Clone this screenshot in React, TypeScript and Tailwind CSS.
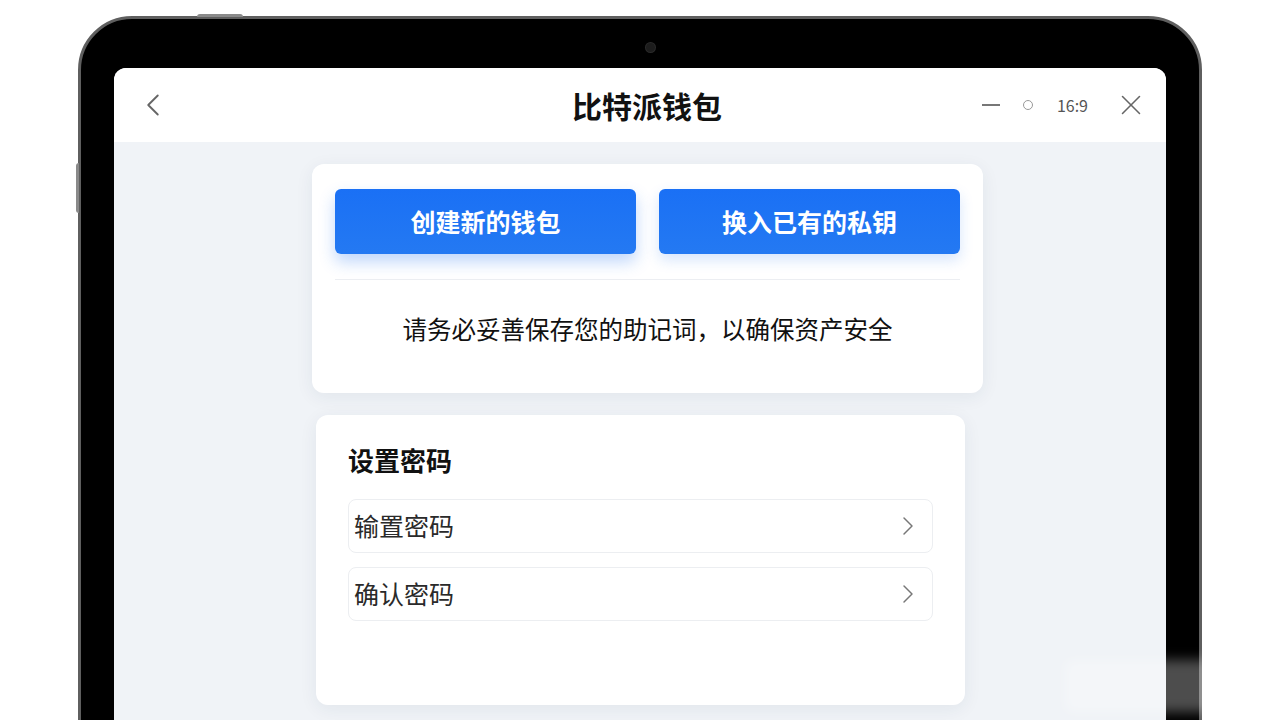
import { ChevronLeft, ChevronRight, X } from 'lucide-react';

const font = { fontFamily: '"Noto Sans CJK SC", "Noto Sans", sans-serif' };

export default function App() {
  return (
    <div className="relative h-[720px] w-[1280px] overflow-hidden bg-white" style={font}>
      <div className="pl-[78px] pt-[16px]">
        {/* Tablet frame */}
        <div className="relative h-[760px] w-[1124px] rounded-[54px] border-[3px] border-[#5f5f5f] bg-black px-[33px] pt-[49px]">
          {/* hardware bits */}
          <div className="absolute left-[116px] top-[-5px] h-[3px] w-[46px] rounded-t bg-[#8a8a8a]" />
          <div className="absolute left-[-5px] top-[144px] h-[50px] w-[3px] rounded-l bg-[#8a8a8a]" />
          <div className="absolute left-[565px] top-[24px] h-[9px] w-[9px] rounded-full bg-[#1c1c1c] ring-1 ring-[#2a2a2a]" />

          {/* Screen */}
          <div className="h-full overflow-hidden rounded-t-[12px] bg-[#f0f3f7]">
            {/* Header */}
            <div className="flex h-[74px] items-center bg-white pl-[20px] pr-[18px]">
              <ChevronLeft className="h-[38px] w-[38px] text-[#666]" strokeWidth={1.2} />
              <div className="flex-1 pl-[140px] text-center text-[30px] font-bold text-[#111]">比特派钱包</div>
              <div className="flex items-center">
                <div className="h-[2px] w-[18px] bg-[#777]" />
                <div className="ml-[23px] h-[10px] w-[10px] rounded-full border-[1.5px] border-[#999]" />
                <span className="ml-[24px] text-[16px] text-[#555]">16:9</span>
                <X className="ml-[26px] h-[34px] w-[34px] text-[#666]" strokeWidth={1.1} />
              </div>
            </div>

            {/* Content */}
            <div className="pt-[22px]">
              {/* Wallet card */}
              <div className="ml-[198px] w-[671px] rounded-[12px] bg-white px-[23px] pt-[25px] shadow-[0_4px_18px_rgba(30,50,90,0.07)]">
                <div className="flex gap-[23px]">
                  <button className="h-[65px] w-[302px] rounded-[6px] bg-gradient-to-b from-[#1a70f5] to-[#2479f2] text-[25px] font-bold text-white shadow-[0_8px_16px_rgba(30,110,240,0.28)]">
                    创建新的钱包
                  </button>
                  <button className="h-[65px] w-[302px] rounded-[6px] bg-gradient-to-b from-[#1a70f5] to-[#2479f2] text-[25px] font-bold text-white shadow-[0_6px_14px_rgba(30,110,240,0.18)]">
                    换入已有的私钥
                  </button>
                </div>
                <div className="mt-[25px] h-px bg-[#eceef2]" />
                <div className="flex h-[113px] items-center justify-center pb-[14px] text-[24.5px] text-[#111]">
                  请务必妥善保存您的助记词，以确保资产安全
                </div>
              </div>

              {/* Password card */}
              <div className="ml-[202px] mt-[22px] h-[290px] w-[649px] rounded-[12px] bg-white pl-[32px] pr-[32px] pt-[26px] shadow-[0_4px_18px_rgba(30,50,90,0.07)]">
                <div className="text-[26px] font-bold leading-[38px] text-[#111]">设置密码</div>
                <div className="mt-[20px] flex flex-col gap-[14px]">
                  {['输置密码', '确认密码'].map((label) => (
                    <div
                      key={label}
                      className="flex h-[54px] items-center justify-between rounded-[8px] border border-[#eceef1] pl-[5px] pr-[8px]"
                    >
                      <span className="text-[25px] text-[#2a2a2a]">{label}</span>
                      <ChevronRight className="h-[32px] w-[32px] text-[#777]" strokeWidth={1.1} />
                    </div>
                  ))}
                </div>
              </div>
            </div>
          </div>
        </div>
      </div>

      {/* faded watermark patch */}
      <div className="absolute left-[1065px] top-[660px] h-[52px] w-[210px] rounded-[6px] bg-white/30 blur-[6px]" />
    </div>
  );
}
